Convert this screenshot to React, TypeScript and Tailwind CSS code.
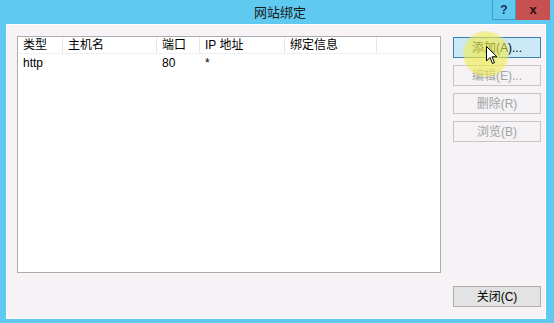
import React from 'react';

const columns = [
  { label: '类型', width: 'w-[45px]' },
  { label: '主机名', width: 'w-[94px]' },
  { label: '端口', width: 'w-[43px]' },
  { label: 'IP 地址', width: 'w-[85px]' },
  { label: '绑定信息', width: 'w-[92px]' },
];

const rows = [['http', '', '80', '*', '']];

const sideButtons = [
  { label: '添加(A)...', active: true },
  { label: '编辑(E)...', active: false },
  { label: '删除(R)', active: false },
  { label: '浏览(B)', active: false },
];

const font = { fontFamily: '"Liberation Sans", "Noto Sans CJK SC", sans-serif' };

const App: React.FC = () => {
  return (
    <div className="w-[554px] h-[323px] bg-[#5fc9ef] flex flex-col overflow-hidden text-[12px] text-black" style={font}>
      {/* Title bar */}
      <div className="relative h-[24px] flex items-center justify-center shrink-0">
        <span className="text-[13px] text-[#1a1a1a] pt-[2px] pl-[6px]">网站绑定</span>
        <div className="absolute top-0 right-[4px] flex">
          <div className="w-[24px] h-[20px] flex items-center justify-center border border-[#3f9cc4] border-t-0 bg-[#5fc9ef] text-[#1b2f5a] font-bold text-[12px]">
            ?
          </div>
          <div className="w-[34px] h-[20px] flex items-center justify-center bg-[#c75050] text-[#2a1010] font-bold text-[13px]">
            x
          </div>
        </div>
      </div>

      {/* Client area */}
      <div className="flex-1 ml-[6px] mr-[8px] mb-[4px] bg-[#f6f2f5] border border-white flex flex-col pl-[10px] pr-[4px] pt-[11px]">
        <div className="flex gap-[12px] h-[237px]">
          {/* List view */}
          <div className="w-[424px] h-full bg-white border border-[#acacac] flex flex-col">
            <div className="flex h-[17px] border-b border-[#f0f0f0]">
              {columns.map((c) => (
                <div key={c.label} className={`${c.width} h-full border-r border-[#e5e5e5] pl-[5px] flex items-center`}>
                  {c.label}
                </div>
              ))}
            </div>
            {rows.map((r, i) => (
              <div key={i} className="flex h-[17px] items-center">
                {r.map((cell, j) => (
                  <div key={j} className={`${columns[j].width} pl-[5px]`}>
                    {cell}
                  </div>
                ))}
              </div>
            ))}
          </div>

          {/* Action buttons */}
          <div className="relative w-[88px] flex flex-col gap-[7px] pt-[1px]">
            {sideButtons.map((b) => (
              <div
                key={b.label}
                className={
                  b.active
                    ? 'h-[21px] flex items-center justify-center border border-[#3c7fb1] bg-[#cbe8f6] text-black'
                    : 'h-[21px] flex items-center justify-center border border-[#c6c6c6] bg-[#f4f2f4] text-[#a3a3a3]'
                }
              >
                {b.label}
              </div>
            ))}
            {/* cursor highlight */}
            <div className="absolute left-[10px] top-[-5px] w-[46px] h-[46px] rounded-full bg-[radial-gradient(circle,rgba(240,236,80,0.75)_0%,rgba(240,236,80,0.6)_62%,rgba(240,236,80,0)_100%)]" />
            <svg className="absolute left-[33px] top-[10px]" width="12" height="19" viewBox="0 0 12 19">
              <path d="M0.5 0.5 L0.5 15 L4 11.5 L6.5 17.5 L8.5 16.6 L6 10.8 L11 10.8 Z" fill="white" stroke="black" strokeWidth="1" />
            </svg>
          </div>
        </div>

        <div className="flex justify-end mt-[13px]">
          <div className="w-[88px] h-[21px] flex items-center justify-center border border-[#adadad] bg-[#e3e3e3]">
            关闭(C)
          </div>
        </div>
      </div>
    </div>
  );
};

export default App;
